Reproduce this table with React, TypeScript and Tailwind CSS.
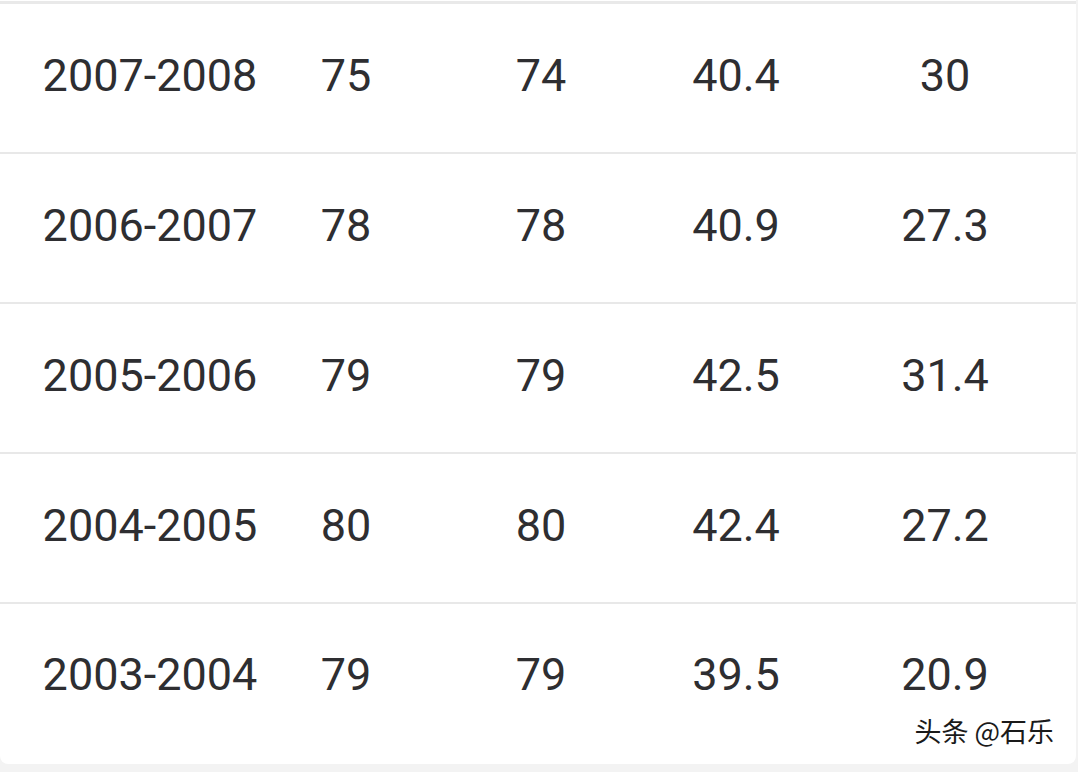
import React from 'react';

const rows = [
  ['2007-2008', '75', '74', '40.4', '30'],
  ['2006-2007', '78', '78', '40.9', '27.3'],
  ['2005-2006', '79', '79', '42.5', '31.4'],
  ['2004-2005', '80', '80', '42.4', '27.2'],
  ['2003-2004', '79', '79', '39.5', '20.9'],
];

export default function App() {
  return (
    <div className="w-[1078px] h-[772px] overflow-hidden bg-[#f3f3f3]">
      <div
        className="relative bg-white w-[1076px] rounded-b-[8px] pt-[1px] text-[#2e2e31]"
        style={{ fontFamily: 'Roboto, "Noto Sans CJK SC", sans-serif' }}
      >
        <div className="h-[3px] bg-[#e9e9e9]" />
        {rows.map((r, i) => (
          <div
            key={i}
            className={
              'grid grid-cols-[300px_92px_298px_92px_1fr] items-center text-[45px] leading-none ' +
              (i < rows.length - 1 ? 'h-[150px] border-b-2 border-[#e8e8e8] pb-[6px]' : 'h-[160px] pb-[20px]')
            }
          >
            <div className="text-center">{r[0]}</div>
            <div className="text-center">{r[1]}</div>
            <div className="text-center">{r[2]}</div>
            <div className="text-center">{r[3]}</div>
            <div className="text-center pl-[32px]">{r[4]}</div>
          </div>
        ))}
        <div
          className="absolute right-[22px] bottom-[20px] text-[27px] leading-none text-[#1a1a1a]"
          style={{ fontFamily: '"Noto Sans CJK SC", sans-serif', textShadow: '0 0 2px #fff' }}
        >
          头条 @石乐
        </div>
      </div>
    </div>
  );
}
